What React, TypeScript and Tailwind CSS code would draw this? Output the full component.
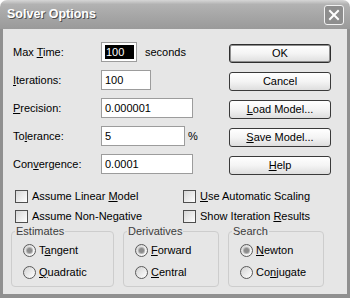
import type { ReactNode } from 'react'

const font = "font-['Liberation_Sans',Arial,sans-serif]"

// underline one mnemonic letter, like the old windows dialogs do
function Mn({ text, at }: { text: string; at: number }) {
  if (at < 0) return <>{text}</>
  return (
    <>
      {text.slice(0, at)}
      <span className="underline underline-offset-[1px]">{text[at]}</span>
      {text.slice(at + 1)}
    </>
  )
}

const rows: { label: string; at: number; value: string; width: string; selected?: boolean; suffix?: string }[] = [
  { label: 'Max Time:', at: 4, value: '100', width: 'w-[36px]', selected: true, suffix: 'seconds' },
  { label: 'Iterations:', at: 0, value: '100', width: 'w-[50px]' },
  { label: 'Precision:', at: 0, value: '0.000001', width: 'w-[92px]' },
  { label: 'Tolerance:', at: 2, value: '5', width: 'w-[84px]', suffix: '%' },
  { label: 'Convergence:', at: 3, value: '0.0001', width: 'w-[92px]' },
]

const buttons = [
  { label: 'OK', at: -1, primary: true },
  { label: 'Cancel', at: -1 },
  { label: 'Load Model...', at: 0 },
  { label: 'Save Model...', at: 0 },
  { label: 'Help', at: 0 },
]

const groups = [
  { title: 'Estimates', width: 'w-[103px]', options: [{ label: 'Tangent', at: 1 }, { label: 'Quadratic', at: 0 }] },
  { title: 'Derivatives', width: 'w-[96px]', options: [{ label: 'Forward', at: 0 }, { label: 'Central', at: 0 }] },
  { title: 'Search', width: 'w-[96px]', options: [{ label: 'Newton', at: 0 }, { label: 'Conjugate', at: 2 }] },
]

function Checkbox({ children }: { children: ReactNode }) {
  return (
    <div className="flex items-center h-[13px] gap-[4px]">
      <span className="w-[13px] h-[13px] shrink-0 border border-[#4f4f4f] bg-[linear-gradient(135deg,#d6d6d6_0%,#f2f2f2_70%,#ffffff_100%)]" />
      <span className="leading-[13px]">{children}</span>
    </div>
  )
}

function Radio({ checked, children }: { checked?: boolean; children: ReactNode }) {
  return (
    <div className="flex items-center h-[13px] gap-[3px]">
      <span className="w-[13px] h-[13px] shrink-0 rounded-full border border-[#5a5a5a] bg-[linear-gradient(135deg,#d2d2d2_0%,#f0f0f0_65%,#ffffff_100%)] flex items-center justify-center">
        {checked && (
          <span className="w-[5px] h-[5px] rounded-full bg-[#8c8c8c] shadow-[0_0_0_1px_#b4b4b4]" />
        )}
      </span>
      <span className="leading-[13px]">{children}</span>
    </div>
  )
}

export default function App() {
  return (
    <div className={`w-[350px] h-[298px] bg-white ${font} text-[11px] text-black`}>
      <div className="flex flex-col h-full rounded-t-[7px] overflow-hidden">
        <div className="h-[29px] shrink-0 flex items-center justify-between pl-[7px] pr-[6px] bg-[linear-gradient(180deg,#d6d6d6_0%,#b2b2b2_15%,#a6a6a6_55%,#9a9a9a_100%)]">
          <span className="text-[12.5px] font-bold text-white [text-shadow:1px_1px_0_#4e4e4e]">Solver Options</span>
          <span className="w-[20px] h-[20px] rounded-[3px] border border-[#f2f2f2] bg-[#8e8e8e] flex items-center justify-center">
            <svg width="12" height="12" viewBox="0 0 12 12">
              <path d="M2 2 L10 10 M10 2 L2 10" stroke="#ffffff" strokeWidth="2" strokeLinecap="square" />
            </svg>
          </span>
        </div>

        <div className="flex-1 flex flex-col bg-[#e6e6e6] border-x-[3px] border-b-[4px] border-[#909090] pl-[10px]">
          <div className="flex">
            <div className="w-[216px] pt-[13px] flex flex-col gap-[8px]">
              {rows.map(r => (
                <div key={r.label} className="flex items-center h-[20px]">
                  <span className="w-[88px]"><Mn text={r.label} at={r.at} /></span>
                  <span className={`${r.width} h-[20px] border border-[#9c9c9c] bg-white flex items-center pl-[3px]`}>
                    {r.selected ? (
                      <span className="w-[29px] h-[14px] bg-black text-white flex items-center pl-[1px]">{r.value}</span>
                    ) : (
                      r.value
                    )}
                  </span>
                  {r.suffix && (
                    <span className={r.suffix === '%' ? 'ml-[3px]' : 'ml-[8px]'}>{r.suffix}</span>
                  )}
                </div>
              ))}
            </div>

            <div className="w-[102px] pt-[15px] flex flex-col gap-[9px]">
              {buttons.map(b => (
                <div
                  key={b.label}
                  className={`h-[19px] rounded-[3px] border flex items-center justify-center bg-[linear-gradient(180deg,#ffffff_0%,#f4f4f4_50%,#dedede_100%)] ${
                    b.primary ? 'border-[#2e2e2e] shadow-[inset_0_0_0_1px_#8f8f8f]' : 'border-[#3a3a3a]'
                  }`}
                >
                  <Mn text={b.label} at={b.at} />
                </div>
              ))}
            </div>
          </div>

          <div className="mt-[15px] ml-[2px] flex">
            <div className="w-[168px] flex flex-col gap-[7px]">
              <Checkbox>Assume Linear <Mn text="Model" at={0} /></Checkbox>
              <Checkbox>Assume Non-Negative</Checkbox>
            </div>
            <div className="flex flex-col gap-[7px]">
              <Checkbox><Mn text="Use Automatic Scaling" at={0} /></Checkbox>
              <Checkbox>Show Iteration <Mn text="Results" at={0} /></Checkbox>
            </div>
          </div>

          <div className="mt-[8px] -ml-[2px] flex gap-[9px]">
            {groups.map(g => (
              <div key={g.title} className={`${g.width} relative h-[56px] border border-[#cdcdcd] rounded-[4px] pl-[11px] pt-[12px]`}>
                <span className="absolute left-[3px] top-[-7px] px-[1px] leading-[13px] bg-[#e6e6e6] text-[#3c3c3c]">{g.title}</span>
                <div className="flex flex-col gap-[9px]">
                  {g.options.map((o, i) => (
                    <Radio key={o.label} checked={i === 0}>
                      <Mn text={o.label} at={o.at} />
                    </Radio>
                  ))}
                </div>
              </div>
            ))}
          </div>
        </div>
      </div>
    </div>
  )
}
